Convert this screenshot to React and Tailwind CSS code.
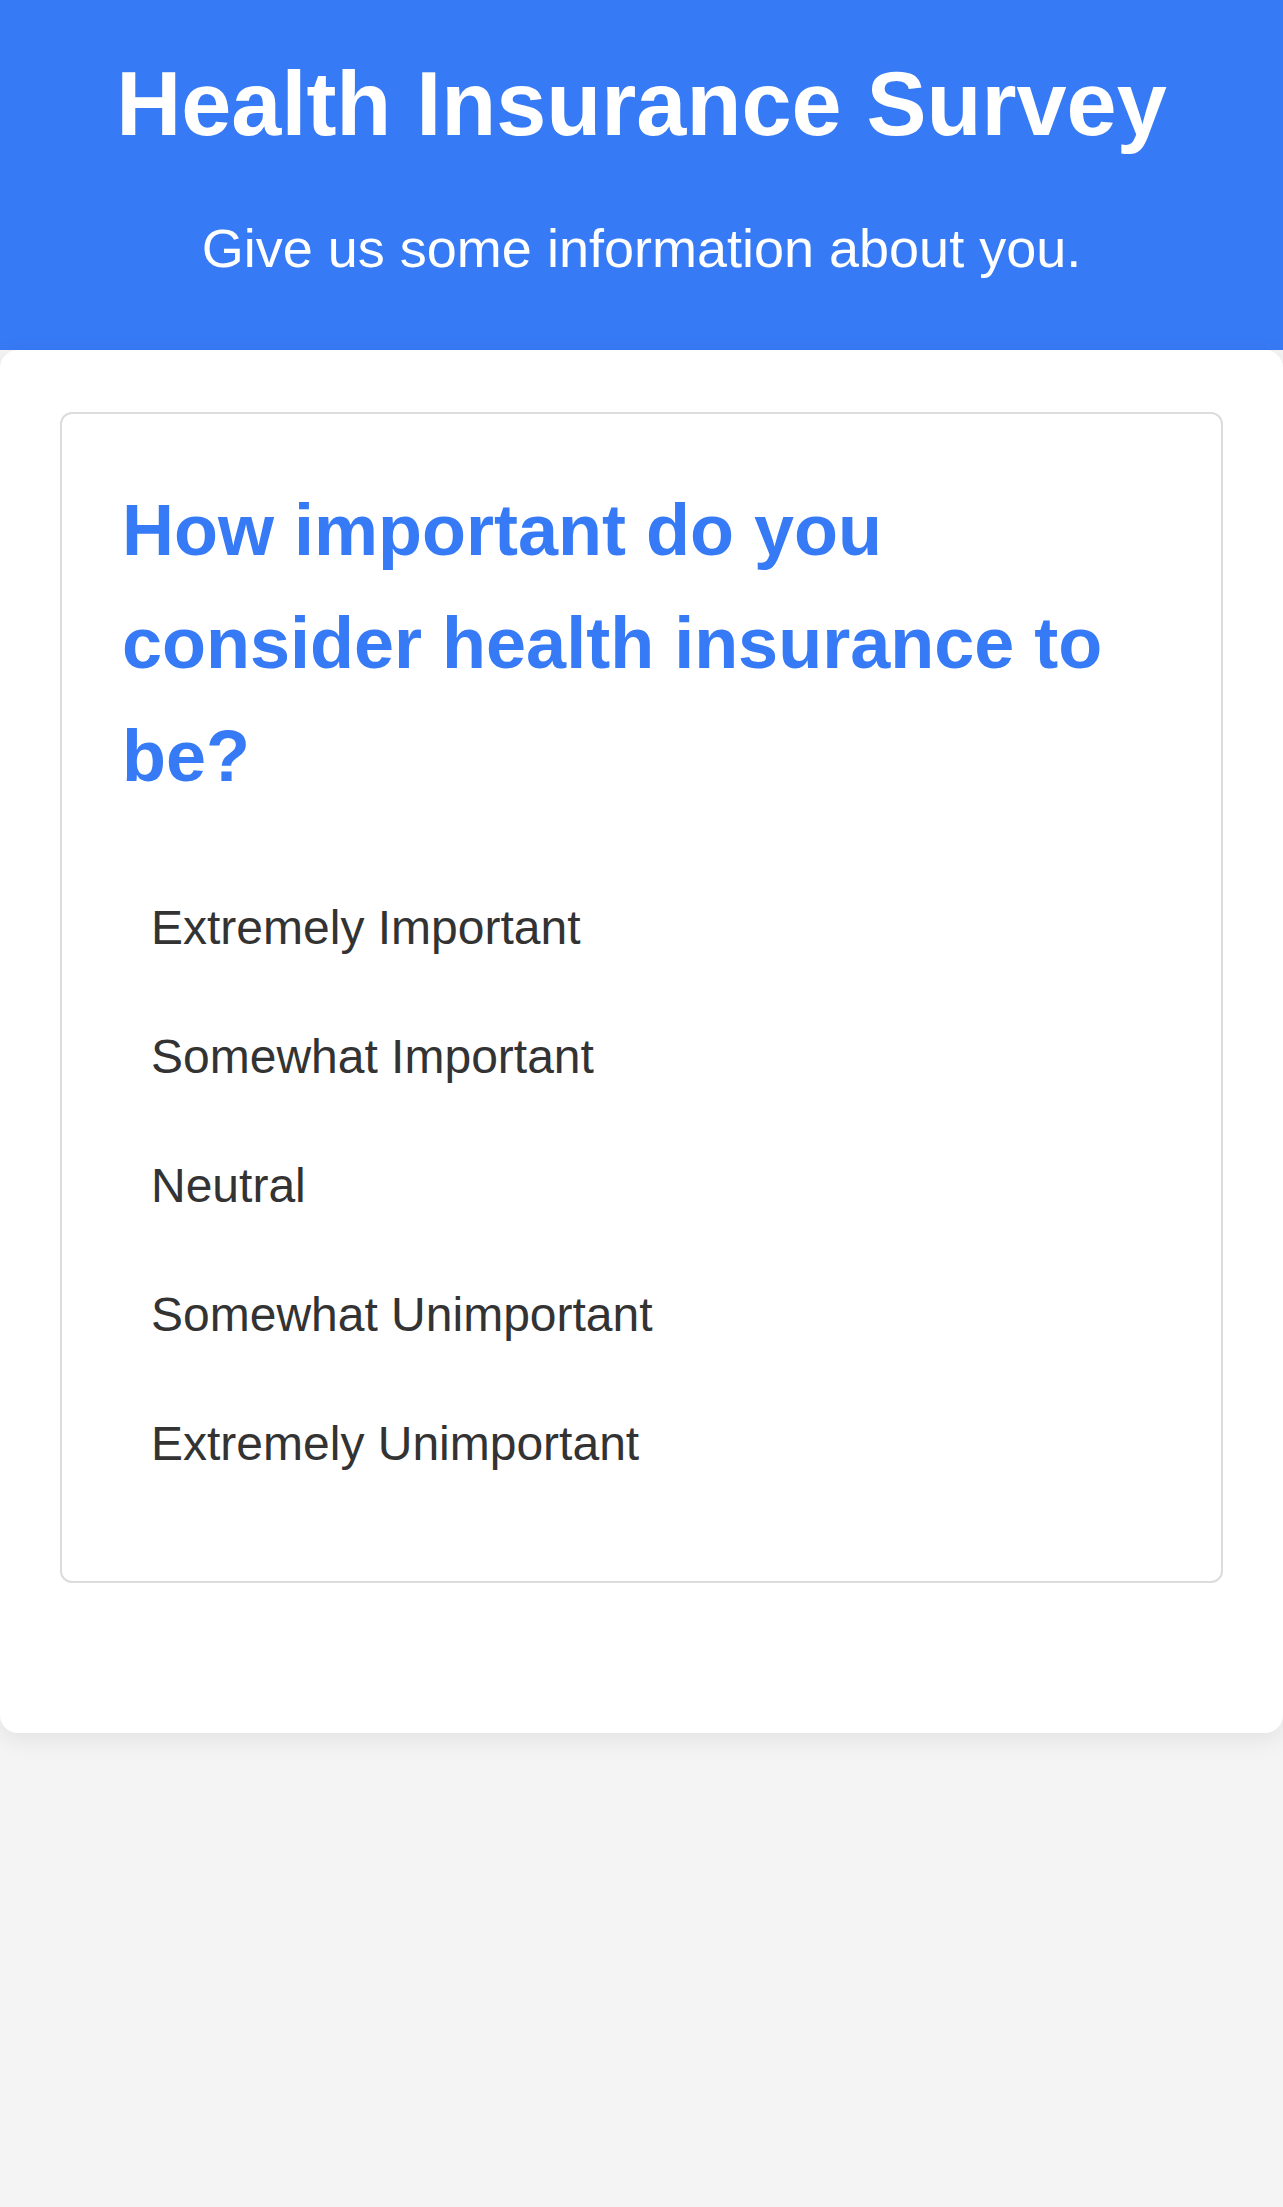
import React from 'react'

const options = [
    'Extremely Important',
    'Somewhat Important',
    'Neutral',
    'Somewhat Unimportant',
    'Extremely Unimportant',
];

const App = () => {
    return (
        <div className="min-h-screen bg-[#f4f4f4] font-['Liberation_Sans',Arial,sans-serif]">
            <header className="bg-[#377af5] pt-[50px] pb-[61px] text-center text-white">
                <h1 className="text-[90px] font-bold leading-[108px]">Health Insurance Survey</h1>
                <p className="mt-[50px] text-[54px] leading-[81px]">Give us some information about you.</p>
            </header>

            <main className="rounded-[18px] bg-white pt-[62px] pl-[60px] pr-[60px] pb-[150px] shadow-[0_6px_24px_rgba(0,0,0,0.08)]">
                <section className="rounded-[12px] border-2 border-[#dcdcdc] pt-[60px] px-[60px] pb-[73px]">
                    <h2 className="text-[72px] font-bold leading-[113px] text-[#377af5]">
                        How important do you consider health insurance to be?
                    </h2>
                    <div className="mt-[50px] flex flex-col">
                        {options.map((label) => (
                            <label key={label} className="block py-[28.5px] pl-[29px] text-[48px] leading-[72px] text-[#333333]">
                                {label}
                            </label>
                        ))}
                    </div>
                </section>
            </main>
        </div>
    )
}

export default App
